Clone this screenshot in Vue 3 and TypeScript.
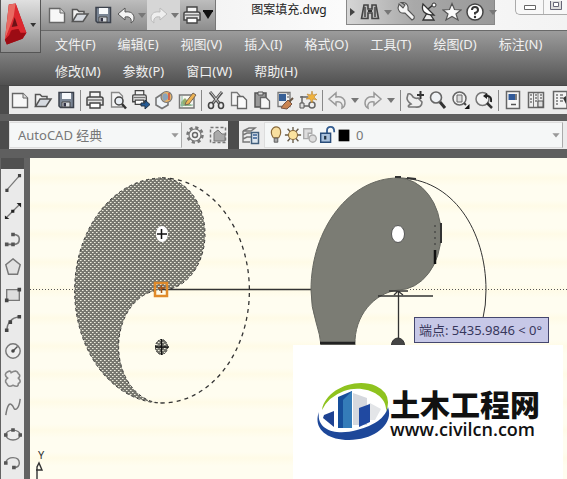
<script setup lang="ts">
import { ref } from 'vue'

interface Tool {
  icon: string
  label: string
  kind?: 'sep' | 'caret'
  soft?: boolean
}

const t = (icon: string, label: string): Tool => ({ icon, label })
const sep: Tool = { icon: '', label: '', kind: 'sep' }
const caret = (label: string): Tool => ({ icon: 'caret', label, kind: 'caret' })

const menus: string[] = [
  '文件(F)', '编辑(E)', '视图(V)', '插入(I)', '格式(O)', '工具(T)', '绘图(D)', '标注(N)',
  '修改(M)', '参数(P)', '窗口(W)', '帮助(H)',
]

const quick: Tool[] = [
  t('page', '新建'), t('folder', '打开'), t('disk', '保存'), t('undoLight', '放弃'), caret('放弃列表'),
  { icon: 'redoLight', label: '重做', soft: true },
  { icon: 'caret', label: '重做列表', kind: 'caret', soft: true },
  t('printer', '打印'), t('caretDark', '自定义'),
]

const info: Tool[] = [
  t('binoculars', '搜索'), caret('搜索选项'), t('wrench', '速博应用'), t('dish', '通讯中心'),
  t('star', '收藏夹'), t('help', '帮助'), caret('帮助选项'),
]

const standard: Tool[] = [
  t('page', '新建'), t('folder', '打开'), t('disk', '保存'), sep,
  t('printer', '打印'), t('preview', '打印预览'), t('publish', '发布'), t('globe', '三维 DWF'), t('markup', '标记集'), sep,
  t('cut', '剪切'), t('copy', '复制'), t('paste', '粘贴'), t('match', '特性匹配'), t('block', '块编辑器'), sep,
  t('undo', '放弃'), caret('放弃列表'), t('redo', '重做'), caret('重做列表'), sep,
  t('pan', '实时平移'), t('zoom', '实时缩放'), t('zoomWindow', '窗口缩放'), t('zoomBack', '缩放上一个'), sep,
  t('props', '特性'), t('center', '设计中心'), t('palette', '工具选项板'),
]

const drawTools: Tool[] = [
  t('line', '直线'), t('xline', '构造线'), t('pline', '多段线'), t('polygon', '正多边形'), t('rect', '矩形'),
  t('arc', '圆弧'), t('circle', '圆'), t('cloud', '修订云线'), t('spline', '样条曲线'), t('ellipse', '椭圆'), t('ellarc', '椭圆弧'),
]

const layerStates: Tool[] = [
  t('bulb', '开/关图层'), t('sun', '冻结'), t('viewport', '视口冻结'), t('lock', '锁定'), t('swatch', '颜色'),
]

const workspace = ref('AutoCAD 经典')
const layer = ref('0')

const undoShape = 'M2 9 L9 3 V7 C15 6 18 9 18 13 C18 15 17 17 15 18 C16 14 14 11 9 12 V15 Z'
const redoShape = 'M18 9 L11 3 V7 C5 6 2 9 2 13 C2 15 3 17 5 18 C4 14 6 11 11 12 V15 Z'
const printerShape =
  '<path d="M5 2H15V8H5Z" fill="#f5f5f5" stroke="#444" stroke-width="1.4"/><path d="M2 8Q2 7 4 7H16Q18 7 18 9V15H2Z" fill="#e4e4e4" stroke="#444" stroke-width="1.5"/><path d="M3 10H17" stroke="#777" stroke-width="1.5"/><path d="M5 13H15V18H5Z" fill="#fff" stroke="#444" stroke-width="1.4"/>'

const icons: Record<string, string> = {
  caret: '<path d="M6 8H14L10 13Z" fill="#777"/>',
  caretDark: '<path d="M5 6H15L10 14Z" fill="#111"/><path d="M5 6H15" stroke="#111" stroke-width="2"/>',
  comboArrow: '<path d="M4 7H16L10 14Z" fill="#999"/>',
  page: '<path d="M2.5 3.5H13L17.5 8V17.5H2.5Z" fill="#f7f7f7" stroke="#666" stroke-width="1.4"/><path d="M13 3.5V8H17.5" fill="#ddd" stroke="#666"/>',
  folder: '<path d="M2.5 16.5V4.5H7L9 6.5H14V9" fill="#f3f3f3" stroke="#555" stroke-width="1.5"/><path d="M2.5 16.5L7 9H18L13 16.5Z" fill="#d6dae0" stroke="#555" stroke-width="1.5"/>',
  disk: '<path d="M3 2.5H17.5V17.5H4.5L3 16Z" fill="#7a8594" stroke="#3c424c" stroke-width="1.5"/><path d="M6 3H15V9H6Z" fill="#f7f9fb"/><path d="M6 12H14V17H6Z" fill="#d9dde2" stroke="#444"/><path d="M7.5 13H10V16.5H7.5Z" fill="#334"/>',
  undoLight: `<path d="${undoShape}" fill="#f4f4f4" stroke="#555"/>`,
  redoLight: `<path d="${redoShape}" fill="#eee" stroke="#bbb"/>`,
  undo: `<path d="${undoShape}" fill="#eee" stroke="#999" stroke-width="1.5"/>`,
  redo: `<path d="${redoShape}" fill="#eee" stroke="#999" stroke-width="1.5"/>`,
  printer: printerShape,
  preview: '<path d="M3.5 2.5H11L14.5 6V17H3.5Z" fill="#f4f4f4" stroke="#888" stroke-width="1.3"/><circle cx="11" cy="11" r="4" fill="#e9eef4" stroke="#444" stroke-width="1.5"/><path d="M14 14L18 18.5" stroke="#333" stroke-width="2.5"/>',
  publish: `<g transform="translate(0 -1) scale(.85)">${printerShape}</g><path d="M10 13H14V10L19 14.5L14 19V16H10Z" fill="#245a94" stroke="#234"/>`,
  globe: '<path d="M2 8L8 4L14 8V15L8 18.5L2 15Z" fill="#eef3f7" stroke="#777" stroke-width="1.6"/><circle cx="12.5" cy="7" r="5.5" fill="#e7b36a" stroke="#777" stroke-width="1.2"/><path d="M9 4Q13 2 14 6T10 11Q7 8 9 4" fill="#8aa4bc"/><path d="M15 3V10" stroke="#c9403a" stroke-width="1.3"/>',
  markup: '<path d="M2.5 5H17V18H2.5Z" fill="#f7f7f0" stroke="#777" stroke-width="1.5"/><path d="M4 12L8 8L15 16H4Z" fill="#96b06e"/><path d="M5 6V17M3 15H16" stroke="#8ba"/><path d="M9 12L16 3L19 5L12 14L8 15Z" fill="#eeb454" stroke="#765"/>',
  cut: '<path d="M4 2L13 13M16 2L7 13" stroke="#555" stroke-width="3"/><path d="M4.5 2L13 13M15.5 2L7 13" stroke="#ccc"/><ellipse cx="5" cy="15.5" rx="2.5" ry="3" fill="none" stroke="#444" stroke-width="1.6"/><ellipse cx="15" cy="15.5" rx="2.5" ry="3" fill="none" stroke="#444" stroke-width="1.6"/>',
  copy: '<path d="M2.5 2.5H8L11 6V15.5H2.5Z" fill="#f5f5f5" stroke="#777" stroke-width="1.3"/><path d="M8.5 6.5H14L17.5 10V18.5H8.5Z" fill="#fafafa" stroke="#666" stroke-width="1.3"/>',
  paste: '<path d="M3 3H14V17H3Z" fill="#999" stroke="#555" stroke-width="1.5"/><path d="M6 2H11V5H6Z" fill="#ddd" stroke="#555"/><path d="M8.5 7.5H14L17.5 11V18.5H8.5Z" fill="#f7f7f7" stroke="#666" stroke-width="1.3"/>',
  match: '<path d="M3 2.5H15V16.5H3Z" fill="#eee" stroke="#777" stroke-width="1.3"/><path d="M4 4H11V11H4Z" fill="#365f96"/><path d="M12 4H14M12 7H14" stroke="#555"/><path d="M18 8L14 12" stroke="#654" stroke-width="2"/><path d="M9 14L13 10L17 14L12 19L6 18Z" fill="#c98452" stroke="#754"/>',
  block: '<path d="M4 6V16H12M2 7H10" fill="none" stroke="#666" stroke-width="1.5"/><path d="M2 13H6V18H2Z" fill="#ddd" stroke="#555"/><circle cx="14" cy="15" r="3" fill="#eee" stroke="#666" stroke-width="1.5"/><path d="M14 1L15 5L19 4L16 7L19 10L15 9L14 13L12 9L8 9L11 7L9 4L13 5Z" fill="#f0b33e" stroke="#b98537" stroke-width=".6"/>',
  pan: '<path d="M3 4Q6 3 8 7Q11 9 13 8L17 12Q17 18 10 17H4Q2 16 6 14Q2 11 2 8Z" fill="#eee" stroke="#777" stroke-width="1.6"/><path d="M15.5 1V9M12 5H19" stroke="#333" stroke-width="2"/>',
  zoom: '<circle cx="8" cy="7.5" r="5.5" fill="#eef1f4" stroke="#666" stroke-width="1.6"/><path d="M12 12L17 18" stroke="#333" stroke-width="3"/>',
  zoomWindow: '<circle cx="8.5" cy="8.5" r="6.5" fill="#f3f3f3" stroke="#666" stroke-width="1.5"/><path d="M6 5H11V12H6Z" fill="#ddd" stroke="#666"/><path d="M13 13L15 15" stroke="#444" stroke-width="2"/><path d="M18.5 14V19H13.5Z" fill="#111"/>',
  zoomBack: '<circle cx="8.5" cy="9" r="6.5" fill="#f3f3f3" stroke="#777" stroke-width="1.5"/><path d="M13 13L18 18" stroke="#333" stroke-width="2.5"/><path d="M17 12Q18 6 13 6" fill="none" stroke="#222" stroke-width="2"/><path d="M9 6L13 3V9Z" fill="#222"/>',
  props: '<path d="M3.5 1.5H16.5V18.5H3.5Z" fill="#f6f6f6" stroke="#666" stroke-width="1.5"/><path d="M5.5 4H12V10H5.5Z" fill="#315a99"/><path d="M13 4V10M8 14.5H13" stroke="#555" stroke-width="1.5"/>',
  center: '<path d="M2.5 2.5H17.5V17.5H2.5Z" fill="#eee" stroke="#666" stroke-width="1.5"/><path d="M7.5 3V17M12 3V17" stroke="#777"/><path d="M4 5H6M4 9H6M4 12H6M9 5H11M9 8H11M9 11H11M14 5H16M14 8H16" stroke="#777" stroke-width="1.5"/><path d="M12 11H17V17H12Z" fill="#ddd" stroke="#555"/>',
  palette: '<path d="M4.5 1.5H18V18.5H4.5Z" fill="#f3f3f3" stroke="#666" stroke-width="1.5"/><path d="M7 5H9M11 5H14M7 8H9M11 8H14M7 11H9M11 11H14M7 14H9" stroke="#777" stroke-width="1.5"/><path d="M14 8L17 6V14Z" fill="#333"/>',
  binoculars: '<path d="M4 3H8V7H12V3H16L18.5 16.5H12V11H8V16.5H1.5Z" fill="#bbb" stroke="#444" stroke-width="1.6"/><path d="M5 5V15M15 5V15" stroke="#444" stroke-width="1.5"/><path d="M8 9H12" stroke="#333" stroke-width="2"/>',
  wrench: '<path d="M3 2L7 6L9 3L5 .5Q11 0 12 5L12 8L18 14Q19 17 16 18L9 11Q3 12 2 6Z" fill="#f4f4f4" stroke="#555" stroke-width="1.1"/>',
  dish: '<path d="M8 11L4 18H15L11 12Z" fill="#eee" stroke="#333" stroke-width="1.3"/><path d="M4 2Q1 13 15 13Z" fill="#fff" stroke="#333" stroke-width="1.3"/><path d="M9 7L14 3" stroke="#333" stroke-width="1.6"/><circle cx="15" cy="3" r="2" fill="#fff" stroke="#333"/>',
  star: '<path d="M10 1.5L12.5 7.5L19 8L14 12L16 18L10 14.5L4 18L6 12L1 8L7.5 7.5Z" fill="#fafafa" stroke="#555" stroke-width="1.2"/>',
  help: '<circle cx="10" cy="10" r="8" fill="#fff" stroke="#444" stroke-width="1.5"/><path d="M7 8Q7 5 10 5T13 8Q13 10 10 11V12.5" fill="none" stroke="#333" stroke-width="2"/><circle cx="10" cy="15" r="1.2" fill="#333"/>',
  play: '<path d="M8 6L13 10L8 14Z" fill="#444"/>',
  gear: '<circle cx="10" cy="10" r="7.5" fill="none" stroke="#777" stroke-width="2.5" stroke-dasharray="3.2 2.69"/><circle cx="10" cy="10" r="6" fill="#f2f2f2" stroke="#777" stroke-width="1.2"/><circle cx="10" cy="10" r="2.5" fill="none" stroke="#666" stroke-width="1.4"/>',
  myspace: '<path d="M2.5 2.5H17.5V17.5H2.5Z" fill="none" stroke="#777" stroke-width="1.5" stroke-dasharray="3 2"/><path d="M6 8L10 5L14 9H17V16H6Z" fill="#aaa" stroke="#777"/>',
  layers: '<path d="M2 6L8 3H14L10 6ZM2 10L6 8H11M2 14L6 12H10M2 6V17H9" fill="none" stroke="#777" stroke-width="1.4"/><path d="M10.5 7.5H17.5V18.5H10.5Z" fill="#dce6ef" stroke="#43607d" stroke-width="1.5"/><path d="M12 10H16M12 13H16" stroke="#365f96" stroke-width="1.5"/>',
  bulb: '<path d="M7 13Q4 9 5 5Q7 1 10 1Q14 1 15 5Q16 9 13 13Z" fill="#f8df9f" stroke="#8b6b3c" stroke-width="1.2"/><path d="M8 13.5H12V18H8Z" fill="#aaa" stroke="#555"/>',
  sun: '<path d="M10 1V19M1 10H19M4 3L16 17M16 3L4 17" stroke="#665b48" stroke-width="1.5"/><circle cx="10" cy="10" r="5" fill="#fbe39f" stroke="#8b6b3c" stroke-width="1.2"/>',
  viewport: '<path d="M3 3H12V8H8V14H3Z" fill="#ddd" stroke="#aaa" stroke-width="1.5"/><circle cx="13" cy="14" r="4" fill="#ddd" stroke="#aaa" stroke-width="1.5"/>',
  lock: '<path d="M10 8V5Q10 1 14 1T18 6V7" fill="none" stroke="#345d91" stroke-width="2"/><path d="M3 8H14V18H3Z" fill="#a9c1dc" stroke="#294d7a" stroke-width="1.6"/><path d="M8 11V15" stroke="#234" stroke-width="2.5"/>',
  swatch: '<path d="M4 4H16V17H4Z" fill="#000"/>',
  line: '<path d="M3 18L17 2" stroke="#777" stroke-width="1.4"/><path d="M1.5 16.5H5V20H1.5ZM15.5 0H19V3.5H15.5Z" fill="#444"/>',
  xline: '<path d="M3 17L17 3" stroke="#777" stroke-width="1.4"/><path d="M1 15L6 19H1ZM14 1H19V6ZM8 8.5H11.5V12H8Z" fill="#222"/>',
  pline: '<path d="M2 16H11Q17 16 17 10Q17 5 10 5" fill="none" stroke="#777" stroke-width="1.8"/><path d="M1 14H5V18H1ZM8 14H12V18H8ZM8 3H12V7H8Z" fill="#555"/>',
  polygon: '<path d="M10 1L18 7.5L15 18H5L2 7.5Z" fill="#e1e1e1" stroke="#777" stroke-width="1.6"/>',
  rect: '<path d="M3 4H17V16H3Z" fill="#ddd" stroke="#777" stroke-width="1.5"/><path d="M1 14H5V18H1ZM15 2H19V6H15Z" fill="#444"/>',
  arc: '<path d="M3 18Q4 5 17 3" fill="none" stroke="#777" stroke-width="1.5"/><path d="M1 16H5V20H1ZM5 7H9V11H5ZM15 1H19V5H15Z" fill="#444"/>',
  circle: '<circle cx="10" cy="10" r="8" fill="#eee" stroke="#777" stroke-width="1.6"/><path d="M10 10L15 5" stroke="#555" stroke-width="1.5"/><circle cx="10" cy="10" r="2" fill="#444"/>',
  cloud: '<path d="M8 3Q14 -1 16 4Q19 6 16 9Q20 13 16 15Q16 20 10 17Q5 20 3 15Q0 12 4 9Q-1 5 4 2Q7 0 8 3Z" fill="#eee" stroke="#888" stroke-width="1.8"/>',
  spline: '<path d="M2 19Q4 5 8 7C12 10 10 14 14 12Q17 10 18 1" fill="none" stroke="#777" stroke-width="1.6"/>',
  ellipse: '<ellipse cx="10" cy="10" rx="8" ry="5.5" fill="#eee" stroke="#777" stroke-width="1.5"/><path d="M0 8H4V12H0ZM16 8H20V12H16ZM8 2.5H12V6.5H8Z" fill="#555"/>',
  ellarc: '<path d="M2 9Q4 4 10 4Q17 4 17 10Q17 15 11 15" fill="none" stroke="#777" stroke-width="1.6"/><path d="M0 8H4V12H0ZM9 13H13V17H9Z" fill="#555"/>',
}
</script>

<template>
  <div class="app">
    <header class="head">
      <button class="logo-button" aria-label="应用程序菜单">
        <svg class="logo-mark" viewBox="0 0 41 52">
          <path d="M8 4L15 3L26 33L22 39L6 45L4 40Z" fill="#b5121b" />
          <path d="M8 4L15 3L18 15L8 31L4 40Z" fill="#e96a62" />
          <path d="M15 3L26 33L22 39L17 29L10 31L8 36L4 40L13 16Z" fill="#dc2930" />
          <path d="M14 17L17 26L11 27Z" fill="#6d1216" />
          <path d="M4 40L9 35L11 30L18 29L20 33L26 33L22 39L6 45Z" fill="#9c0c14" />
          <path d="M30 23H36L33 27Z" fill="#333" />
        </svg>
      </button>
      <div class="title-bar">
        <nav class="quick" aria-label="快速访问工具栏">
          <button
            v-for="(item, i) in quick"
            :key="i"
            :class="['tool', { caret: item.kind === 'caret' || item.icon === 'caretDark', soft: item.soft }]"
            :aria-label="item.label"
          >
            <svg class="icon" viewBox="0 0 20 20" v-html="icons[item.icon]"></svg>
          </button>
        </nav>
        <span class="file-name">图案填充.dwg</span>
        <div class="info">
          <button class="tool caret" aria-label="展开">
            <svg class="icon" viewBox="0 0 20 20" v-html="icons.play"></svg>
          </button>
          <button
            v-for="(item, i) in info"
            :key="i"
            :class="['tool', { caret: item.kind === 'caret' }]"
            :aria-label="item.label"
          >
            <svg class="icon" viewBox="0 0 20 20" v-html="icons[item.icon]"></svg>
          </button>
        </div>
        <div class="window-controls">
          <button class="win" aria-label="最小化">
            <svg width="14" height="12" viewBox="0 0 14 12"><path d="M1.5 4.5H12.5V8.5H1.5Z" fill="#fff" stroke="#666" /></svg>
          </button>
          <button class="win" aria-label="还原">
            <svg width="14" height="12" viewBox="0 0 14 12">
              <path d="M1.5 0V8.5H12.5V0" fill="#ddd" stroke="#667" />
              <path d="M4.5 1.5H9.5V5.5H4.5Z" fill="#fff" stroke="#667" />
            </svg>
          </button>
        </div>
      </div>
      <nav class="menu">
        <button v-for="m in menus" :key="m" class="menu-item">{{ m }}</button>
      </nav>
    </header>

    <div class="bars">
      <div class="bar">
        <template v-for="(item, i) in standard" :key="i">
          <span v-if="item.kind === 'sep'" class="sep"></span>
          <button v-else :class="['tool', { caret: item.kind === 'caret' }]" :aria-label="item.label">
            <svg class="icon" viewBox="0 0 20 20" v-html="icons[item.icon]"></svg>
          </button>
        </template>
      </div>
      <div class="bar-row">
        <div class="bar workspace">
          <label class="combo">
            <select v-model="workspace" class="select" aria-label="工作空间">
              <option>AutoCAD 经典</option>
            </select>
            <svg class="combo-arrow" viewBox="0 0 20 20" v-html="icons.comboArrow"></svg>
          </label>
          <button class="tool" aria-label="工作空间设置"><svg class="icon" viewBox="0 0 20 20" v-html="icons.gear"></svg></button>
          <button class="tool" aria-label="我的工作空间"><svg class="icon" viewBox="0 0 20 20" v-html="icons.myspace"></svg></button>
        </div>
        <div class="bar layer-bar">
          <button class="tool" aria-label="图层特性管理器"><svg class="icon" viewBox="0 0 20 20" v-html="icons.layers"></svg></button>
          <div class="combo layer">
            <button v-for="s in layerStates" :key="s.icon" class="state" :aria-label="s.label">
              <svg class="icon small" viewBox="0 0 20 20" v-html="icons[s.icon]"></svg>
            </button>
            <select v-model="layer" class="select" aria-label="图层">
              <option>0</option>
            </select>
            <svg class="combo-arrow" viewBox="0 0 20 20" v-html="icons.comboArrow"></svg>
          </div>
        </div>
      </div>
    </div>

    <main class="work">
      <aside class="draw-tools" aria-label="绘图">
        <div class="grip"></div>
        <button v-for="item in drawTools" :key="item.icon" class="draw-tool" :aria-label="item.label">
          <svg class="icon small" viewBox="0 0 20 20" v-html="icons[item.icon]"></svg>
        </button>
      </aside>
      <section class="canvas">
        <svg class="drawing" width="537" height="321" viewBox="30 158 537 321" aria-label="图案填充">
          <defs>
            <pattern id="net" width="4" height="4" patternUnits="userSpaceOnUse">
              <rect width="4" height="4" fill="#77776f" />
              <rect x="0" y="0" width="1" height="1" fill="#eeedde" />
              <rect x="1" y="0" width="1" height="1" fill="#bab9ad" />
              <rect x="2" y="2" width="1" height="1" fill="#eeedde" />
              <rect x="3" y="2" width="1" height="1" fill="#bab9ad" />
            </pattern>
          </defs>
          <g fill="none" stroke="#333">
            <path d="M162 178A87 112 0 0 1 162 403" stroke-dasharray="4 4" stroke-width="1.3" />
            <path
              d="M162 178A43 56 0 0 1 162 290A43 56 0 0 0 162 403A87 112 0 0 1 162 178Z"
              fill="url(#net)" stroke-dasharray="3 3"
            />
            <ellipse cx="162" cy="234" rx="6" ry="8" fill="#fff" stroke="none" />
            <path d="M157 234H167M161.500 229V239" stroke="#111" stroke-width="1.5" />
            <ellipse cx="161.5" cy="347" rx="6" ry="7.5" fill="url(#net)" stroke-dasharray="2 1" />
            <path d="M155 347H169M161.5 339V355" stroke="#111" stroke-width="1.5" />
            <path d="M30 289.5H162M410 289.5H567" stroke-dasharray="1 2" stroke="#555" />
            <path d="M162 289.5H311" stroke="#333" stroke-width="1.5" />
            <path d="M155 283H167V296H155Z" stroke="#e08b2b" stroke-width="2.5" />
            <path d="M158 288H165M161.5 285V293" stroke="#a65314" stroke-width="1.5" />
            <path d="M398 178C453 178 486 231 486 290Q486 306 483 318" />
            <path
              d="M398 178A43 56 0 0 1 398 290C374 293 354 316 355 345H321Q320 335 316 322Q311 307 311 290C311 228 350 178 398 178Z"
              fill="#7b7c74" stroke="#666760"
            />
            <path d="M395 177H401M407 178L416 179M441 223V243" stroke-width="2" />
            <path d="M320 343H355" stroke="#222" stroke-width="2.5" />
            <path d="M435 225V246" stroke-dasharray="2 4" />
            <path d="M435 250V264" stroke="#111" stroke-width="2.5" />
            <ellipse cx="398" cy="234" rx="6.5" ry="8.5" fill="#fff" stroke="#555" />
            <path d="M378 296H433M398.5 291V344" stroke="#333" stroke-width="1.3" />
            <path d="M389 291H408M394 295L398 291L403 295" stroke="#333" stroke-width="1.3" />
            <ellipse cx="398" cy="345" rx="6.5" ry="7" fill="#444" />
            <path d="M37 479V467L39 463L42 470H36" stroke="#333" stroke-width="1.4" />
          </g>
          <text x="41" y="459" class="axis" text-anchor="middle">Y</text>
        </svg>
        <div class="tip">端点: 5435.9846 &lt; 0°</div>
        <a class="brand" href="#">
          <svg class="brand-mark" width="74" height="62" viewBox="316 380 74 62">
            <path d="M322 410C325 390 355 377 376 386Q393 394 386 412C388 395 365 384 344 391Q328 397 322 410Z" fill="#8fc31f" />
            <path d="M353 393L367 398V425H353Z" fill="#d5d8de" />
            <path d="M370 403L381 409L375 420H367V405Z" fill="#e3e5e8" />
            <path d="M338 397L352 391V428H338Z" fill="#174f9b" />
            <path d="M343 400L352 391V428H343Z" fill="#347cb9" />
            <path d="M324 415L334 411V427L323 418Z" fill="#1e4292" />
            <path d="M359 408L370 404V422L359 427Z" fill="#2049a1" />
            <path d="M319 412C316 430 336 436 357 430Q384 423 388 407C394 424 375 440 349 440C325 440 313 427 319 412Z" fill="#1d4799" />
          </svg>
          <span class="brand-text">
            <strong class="brand-name">土木工程网</strong>
            <span class="brand-url">www.civilcn.com</span>
          </span>
        </a>
      </section>
    </main>
  </div>
</template>

<style>
body {
  margin: 0;
  background: #636363;
}
</style>

<style scoped>
.app {
  display: flex;
  flex-direction: column;
  height: 100vh;
  overflow: hidden;
  background: #636363;
  font-family: "Noto Sans", "Noto Sans CJK SC", sans-serif;
}
button {
  flex: none;
  margin: 0;
  padding: 0;
  border: 0;
  background: none;
  font: inherit;
  color: inherit;
}
svg {
  display: block;
}
.icon {
  flex: none;
  width: 20px;
  height: 20px;
}
.icon.small {
  width: 18px;
  height: 18px;
}
.head {
  position: relative;
  border-bottom: 1px solid #484848;
}
.logo-button {
  position: absolute;
  left: 0;
  top: 0;
  box-sizing: border-box;
  width: 41px;
  height: 53px;
  border: 1px solid #555;
  border-top: 0;
  background: linear-gradient(#e0e0e0, #8f8f8f);
}
.logo-mark {
  width: 40px;
  height: 52px;
}
.title-bar {
  display: flex;
  align-items: flex-start;
  height: 30px;
  padding-left: 41px;
  border-bottom: 1px solid #696969;
  background: linear-gradient(90deg, #e8e8e8, #fbfbfb 60%, #f3f3f3);
}
.quick {
  display: flex;
  align-items: center;
  box-sizing: border-box;
  width: 175px;
  height: 30px;
  padding-left: 4px;
  border-right: 1px solid #777;
  background: linear-gradient(#bdbdbd, #8d8d8d);
}
.tool {
  display: flex;
  align-items: center;
  justify-content: center;
  width: 20px;
  height: 26px;
}
.quick .tool {
  width: 23px;
  height: 30px;
}
.tool.caret,
.quick .tool.caret {
  width: 10px;
}
.quick .tool.soft {
  background: #d6d6d6;
}
.file-name {
  flex: 1;
  padding-left: 16px;
  text-align: center;
  font-size: 12px;
  line-height: 20px;
  white-space: nowrap;
  color: #222;
}
.info {
  display: flex;
  align-items: center;
  gap: 3px;
  box-sizing: border-box;
  width: 149px;
  height: 25px;
  margin-right: 20px;
  border: 1px solid #888;
  border-top: 0;
  background: linear-gradient(90deg, #d6d6d6, #a9a9a9 45%, #999);
}
.window-controls {
  display: flex;
  height: 14px;
  border: 1px solid #aaa;
  border-top: 0;
  border-right: 0;
  border-radius: 0 0 0 5px;
  background: #f8f8f8;
}
.win {
  display: flex;
  align-items: center;
  justify-content: center;
  width: 27px;
  height: 14px;
}
.win + .win {
  width: 24px;
  border-left: 1px solid #bbb;
}
.menu {
  display: flex;
  flex-wrap: wrap;
  gap: 0 22px;
  padding-left: 55px;
  background: linear-gradient(#9c9c9c, #777 50%, #515151);
}
.menu-item {
  height: 27px;
  font-size: 13px;
  line-height: 27px;
  color: #f0f0f0;
}
.bars {
  display: flex;
  flex-direction: column;
  gap: 7px;
  padding-bottom: 9px;
  background: #5f5f5f;
}
.bar {
  display: flex;
  align-items: center;
  gap: 3px;
  height: 28px;
  padding-left: 1px;
  border-left: 9px solid #4c4c4c;
  background: #ececec;
  overflow: hidden;
}
.bar-row {
  display: flex;
}
.workspace {
  flex: none;
  width: 219px;
  padding: 0;
}
.layer-bar {
  flex: 1;
  padding: 0 4px 0 2px;
  border-left: 11px solid #4c4c4c;
}
.combo {
  display: flex;
  flex: 1;
  align-items: center;
  box-sizing: border-box;
  height: 26px;
  border: 1px solid #ddd;
  border-right-color: #aaa;
  background: #f5f7f7;
}
.select {
  flex: 1;
  min-width: 0;
  height: 24px;
  margin: 0;
  padding: 0 8px;
  border: 0;
  appearance: none;
  background: transparent;
  font: inherit;
  font-size: 13px;
  color: #777;
}
.layer {
  padding-left: 2px;
}
.layer .select {
  padding: 0 4px;
}
.combo-arrow {
  flex: none;
  width: 12px;
  height: 12px;
}
.state {
  width: 17px;
  height: 18px;
}
.sep {
  flex: none;
  box-sizing: border-box;
  width: 3px;
  height: 23px;
  border: 1px solid #ececec;
  background: #888;
}
.work {
  display: flex;
  flex: 1;
  min-height: 0;
}
.draw-tools {
  flex: none;
  width: 23px;
  margin: 0 6px 0 1px;
  background: #eaeaea;
  overflow: hidden;
}
.grip {
  height: 11px;
  background: #505050;
}
.draw-tool {
  display: flex;
  align-items: center;
  justify-content: center;
  width: 23px;
  height: 28px;
}
.canvas {
  position: relative;
  flex: 1;
  overflow: hidden;
  background: repeating-linear-gradient(#fffdf0, #fffdf0 14px, #fffbe7 20px, #fffdf0 28px);
}
.axis {
  font-size: 11px;
  fill: #333;
}
.tip {
  position: absolute;
  left: 384px;
  top: 159px;
  box-sizing: border-box;
  height: 26px;
  padding: 0 6px 0 4px;
  border: 1px solid #44466e;
  background: #c7c8e7;
  font-size: 13px;
  line-height: 24px;
  white-space: nowrap;
  color: #37375c;
}
.brand {
  position: absolute;
  left: 263px;
  right: 4px;
  top: 187px;
  bottom: 0;
  display: flex;
  align-items: flex-start;
  padding: 35px 0 0 23px;
  background: #fff;
  color: #111;
  text-decoration: none;
}
.brand-mark {
  flex: none;
}
.brand-text {
  display: flex;
  flex-direction: column;
  padding-top: 8px;
}
.brand-name {
  font-family: "Noto Sans CJK SC", sans-serif;
  font-size: 30px;
  font-weight: 900;
  line-height: 30px;
  white-space: nowrap;
}
.brand-url {
  font-family: "Open Sans", "Noto Sans", sans-serif;
  font-size: 18px;
  font-weight: 600;
  line-height: 22px;
}
</style>
